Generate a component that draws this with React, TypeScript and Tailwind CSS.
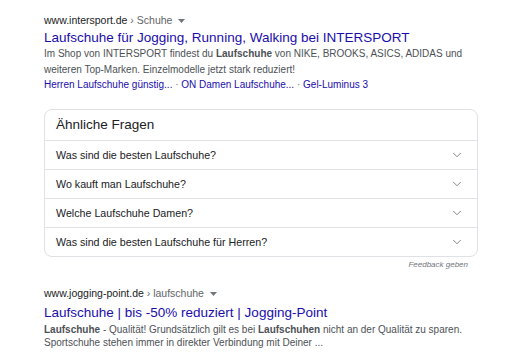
import { ChevronDown } from 'lucide-react'

const questions = [
  'Was sind die besten Laufschuhe?',
  'Wo kauft man Laufschuhe?',
  'Welche Laufschuhe Damen?',
  'Was sind die besten Laufschuhe für Herren?',
]

function Caret() {
  return (
    <svg width="7" height="4" viewBox="0 0 7 4" className="ml-1.5 inline-block">
      <path d="M0 0h7L3.5 4z" fill="#70757a" />
    </svg>
  )
}

export default function App() {
  return (
    <div className="min-h-[354px] w-[509px] overflow-hidden bg-white pl-[44px] pr-[30px] pt-[14px] [font-family:Liberation_Sans,Arial,sans-serif]">
      {/* first result */}
      <div>
        <div className="flex items-center text-[10.5px] leading-[13px] text-[#202124]">
          www.intersport.de
          <span className="text-[#5f6368]">&nbsp;› Schuhe</span>
          <Caret />
        </div>
        <a className="mt-[2px] block text-[13.5px] leading-[18px] text-[#1a0dab]">
          Laufschuhe für Jogging, Running, Walking bei INTERSPORT
        </a>
        <p className="-mt-[1px] text-[10px] leading-[16px] text-[#4d5156]">
          Im Shop von INTERSPORT findest du <b>Laufschuhe</b> von NIKE, BROOKS,
          ASICS, ADIDAS und weiteren Top-Marken. Einzelmodelle jetzt stark
          reduziert!
        </p>
        <div className="text-[10px] leading-[13px] text-[#1a0dab]">
          Herren Laufschuhe günstig...
          <span className="text-[#70757a]"> · </span>
          ON Damen Laufschuhe...
          <span className="text-[#70757a]"> · </span>
          Gel-Luminus 3
        </div>
      </div>

      {/* related questions */}
      <div className="mt-[18px] w-[434px] rounded-[8px] border border-[#dfe1e5]">
        <div className="flex h-[30px] items-center px-[11px] text-[13.5px] text-[#202124]">
          Ähnliche Fragen
        </div>
        {questions.map((q) => (
          <div
            key={q}
            className="flex h-[29px] items-center justify-between border-t border-[#dfe1e5] pl-[11px] pr-[13px] text-[10.7px] text-[#202124]"
          >
            <span>{q}</span>
            <ChevronDown size={14} strokeWidth={1.5} color="#70757a" />
          </div>
        ))}
      </div>
      <div className="w-[424px] pt-[2px] text-right text-[8px] leading-[12px] italic text-[#70757a]">
        Feedback geben
      </div>

      {/* second result */}
      <div className="mt-[16px]">
        <div className="flex items-center text-[10.5px] leading-[13px] text-[#202124]">
          www.jogging-point.de
          <span className="text-[#5f6368]">&nbsp;› laufschuhe</span>
          <Caret />
        </div>
        <a className="mt-[4px] block text-[13.5px] leading-[18px] text-[#1a0dab]">
          Laufschuhe | bis -50% reduziert | Jogging-Point
        </a>
        <p className="mt-[1px] text-[10px] leading-[13px] text-[#4d5156]">
          <b>Laufschuhe</b> - Qualität! Grundsätzlich gilt es bei{' '}
          <b>Laufschuhen</b> nicht an der Qualität zu sparen. Sportschuhe stehen
          immer in direkter Verbindung mit Deiner ...
        </p>
      </div>
    </div>
  )
}
